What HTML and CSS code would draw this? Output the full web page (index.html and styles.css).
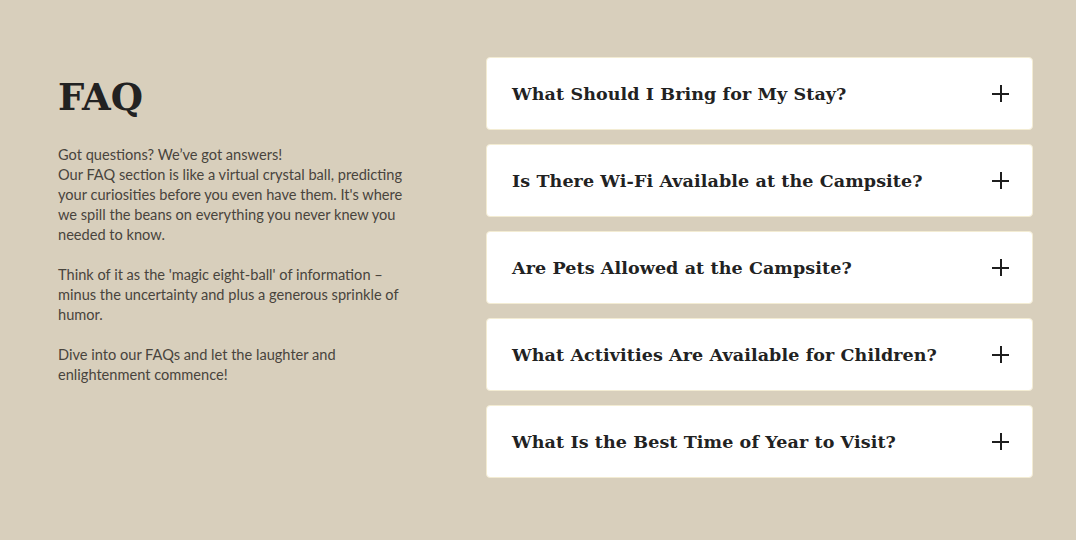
FILE: index.html
```html
<!DOCTYPE html>
<html lang="en">
<head>
<meta charset="utf-8">
<title>FAQ</title>
<link rel="stylesheet" href="styles.css">
</head>
<body>
<section class="faq">
  <div class="intro">
    <h1 class="title">FAQ</h1>
    <p class="text">Got questions? We’ve got answers!<br>Our FAQ section is like a virtual crystal ball, predicting your curiosities before you even have them. It's where we spill the beans on everything you never knew you needed to know.</p>
    <p class="text">Think of it as the 'magic eight-ball' of information – minus the uncertainty and plus a generous sprinkle of humor.</p>
    <p class="text">Dive into our FAQs and let the laughter and enlightenment commence!</p>
  </div>
  <div class="list">
    <div class="item"><span class="q">What Should I Bring for My Stay?</span><span class="plus"></span></div>
    <div class="item"><span class="q">Is There Wi-Fi Available at the Campsite?</span><span class="plus"></span></div>
    <div class="item"><span class="q">Are Pets Allowed at the Campsite?</span><span class="plus"></span></div>
    <div class="item"><span class="q">What Activities Are Available for Children?</span><span class="plus"></span></div>
    <div class="item"><span class="q">What Is the Best Time of Year to Visit?</span><span class="plus"></span></div>
  </div>
</section>
</body>
</html>
```
FILE: styles.css
```css
html, body {
  margin: 0;
  padding: 0;
  background: #d8cfbc;
}
.faq {
  display: grid;
  grid-template-columns: 362px 547px;
  column-gap: 66px;
  padding: 57px 43px 0 58px;
  height: 540px;
  box-sizing: border-box;
}
.intro {
  width: 352px;
}
.title {
  margin: 20px 0 28px;
  font-family: "DejaVu Serif", serif;
  font-weight: bold;
  font-size: 37px;
  line-height: 40px;
  color: #222;
}
.text {
  margin: 0 0 20px;
  font-family: "Lato", sans-serif;
  font-size: 14.6px;
  line-height: 20px;
  color: #48443d;
}
.list {
  display: flex;
  flex-direction: column;
  gap: 14px;
}
.item {
  height: 73px;
  box-sizing: border-box;
  background: #fff;
  border: 1px solid #f3ecd3;
  border-radius: 4px;
  display: flex;
  align-items: center;
  justify-content: space-between;
  padding: 0 23px 0 25px;
}
.q {
  font-family: "DejaVu Serif", serif;
  font-weight: bold;
  font-size: 17.5px;
  color: #222;
  letter-spacing: 0.1px;
}
.plus {
  position: relative;
  width: 17px;
  height: 17px;
}
.plus::before, .plus::after {
  content: "";
  position: absolute;
  background: #1e1e1e;
}
.plus::before {
  left: 0; right: 0; top: 7.5px; height: 2px;
}
.plus::after {
  top: 0; bottom: 0; left: 7.5px; width: 2px;
}
```
